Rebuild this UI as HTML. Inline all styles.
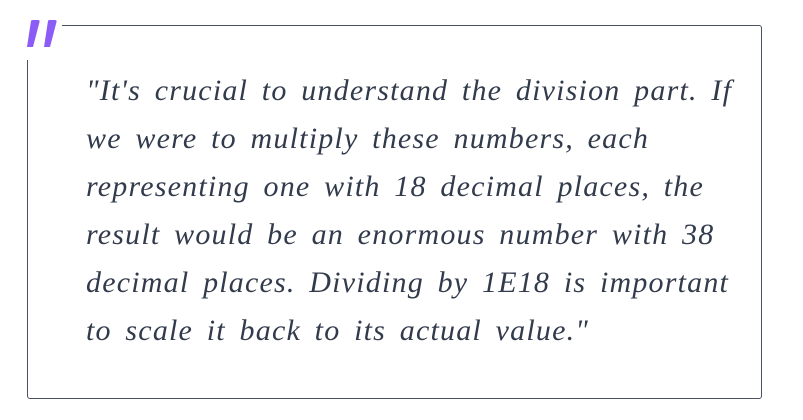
<!DOCTYPE html>
<html><head><style>
html,body{margin:0;padding:0;background:#fff;width:803px;height:420px;overflow:hidden}
.box{position:absolute;left:27px;top:25px;width:733px;height:372px;border:1px solid #4a5160;border-radius:3px}
.gap{position:absolute;left:20px;top:18px;width:42px;height:42px;background:#fff}
.q{position:absolute;left:26px;top:20px}
.t{position:absolute;left:86px;top:67px;font-family:"Liberation Serif",serif;font-style:italic;font-size:30px;line-height:48px;color:#323b4c;letter-spacing:1.2px;word-spacing:5px;white-space:nowrap}
</style></head><body>
<div class="box"></div>
<div class="gap"></div>
<svg class="q" width="32" height="28" viewBox="0 0 32 28">
<path d="M5 1 Q5 0 7 0 H12 Q14 0 13.5 2 L7 27 H1 Z" fill="#8b5cf6"/>
<path d="M22 1 Q22 0 24 0 H29 Q31 0 30.5 2 L24 27 H18 Z" fill="#8b5cf6"/>
</svg>
<div class="t">"It's crucial to understand the division part. If<br>we were to multiply these numbers, each<br>representing one with 18 decimal places, the<br>result would be an enormous number with 38<br>decimal places. Dividing by 1E18 is important<br>to scale it back to its actual value."</div>
</body></html>
